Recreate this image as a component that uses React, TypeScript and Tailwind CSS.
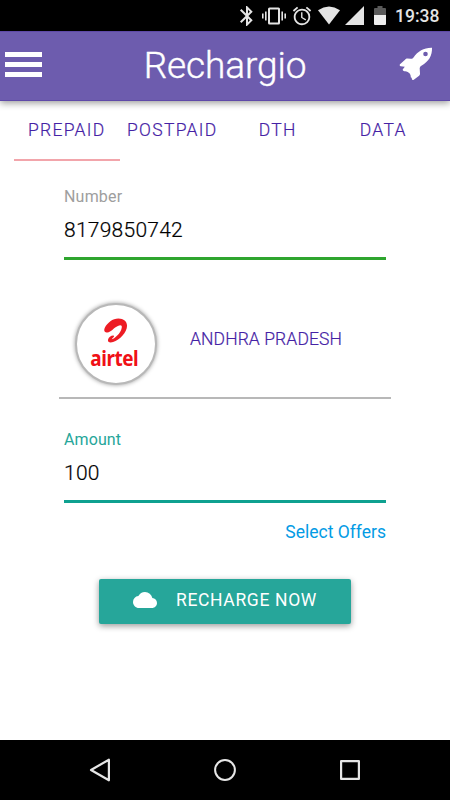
import React, {useState} from 'react';
import {MdAlarm, MdBluetooth, MdCloud} from 'react-icons/md';

const tabs = ['PREPAID', 'POSTPAID', 'DTH', 'DATA'];

const StatusBar = () => (
    <div className="flex h-[31px] items-center bg-black pl-[235px] text-[#e4e4e4]">
        <MdBluetooth className="h-6 w-6 shrink-0"/>
        <svg className="ml-[3px] h-6 w-6 shrink-0" viewBox="0 0 24 24" fill="currentColor">
            <path d="M0 9.500h1.600v5H0zM3 7.500h1.600v9H3zM19.400 7.500H21v9h-1.600zM22.400 9.500H24v5h-1.600z"/>
            <path fillRule="evenodd" d="M7.500 3.500h9q1.500 0 1.500 1.500v14q0 1.500-1.500 1.500h-9Q6 20.500 6 19V5q0-1.500 1.500-1.500zM8 5.500v13h8v-13z"/>
        </svg>
        <MdAlarm className="ml-1 h-[22px] w-6 shrink-0"/>
        <svg className="ml-[3px] h-[19px] w-6 shrink-0" viewBox="0 0 24 19" fill="currentColor">
            <path d="M12 18.500 1 4.200Q12-3 23 4.200z"/>
        </svg>
        <svg className="ml-[4px] h-[19px] w-[19px] shrink-0" viewBox="0 0 19 19" fill="currentColor">
            <path d="M19 0v19H0z"/>
        </svg>
        <svg className="ml-[10px] h-[19px] w-3 shrink-0" viewBox="0 0 12 19">
            <path d="M3.500 0h5v2H11q1 0 1 1v6H0V3q0-1 1-1h2.500z" fill="#5a5a5a"/>
            <path d="M0 9h12v9q0 1-1 1H1q-1 0-1-1z" fill="#eeeeee"/>
        </svg>
        <span className="mt-[2px] ml-[9px] text-[17.5px] leading-none font-medium">19:38</span>
    </div>
);

const Header = () => (
    <header className="z-10 flex h-[70px] items-center border-y border-[#5f49a8] bg-[#6d5cae] pr-[17px] pl-[5px] shadow-[0_2px_7px_rgba(0,0,0,0.4)]">
        <button type="button" aria-label="Menu" className="flex w-[37px] flex-col gap-[5px] pb-[3px]">
            <span className="h-[5px] bg-white"/>
            <span className="h-[5px] bg-white"/>
            <span className="h-[5px] bg-white"/>
        </button>
        <h1 className="flex-1 pb-[2px] pl-[9px] text-center text-[37px] leading-none font-light tracking-[-0.1px] text-white [-webkit-text-stroke:0.4px_white]">Rechargio</h1>
        <svg className="mb-[5px] h-[34px] w-[34px]" viewBox="0 0 34 34" fill="#ffffff">
            <path
                fillRule="evenodd"
                d="M33 .700C25 .500 19 4 14.500 10.500c-.700 1-1.500 1.300-2.700 1.200L8.300 11.500c-.900 0-1.500.300-2 1.100L1 17.200c-.6.800-.3 1.800.7 2l4.100.6c-.7.900-1.700 1.800-2.200 2.900.500 1.200 1.500 1.500 2.600 1.500 1.800.1 3.400.9 4.500 2.400.9 1.200 1 2.400 1.100 3.700.1.500.6.600 1 .3l0 1.400c.300 1.200 1.200 1.300 2 .7l5.300-3.900c.700-.600 1-1.300.9-2.300l-.3-4.900c0-1.100.4-1.900 1.300-2.700C30 14.500 33.300 8.500 33 .700zM26.500 4.700a2.300 2.300 0 1 1 0 4.600 2.300 2.300 0 0 1 0-4.600z"
            />
        </svg>
    </header>
);

const AirtelLogo = () => (
    <div className="-ml-px flex h-[82px] w-[82px] flex-col items-center rounded-full border-2 border-[#b8b8b8] bg-white pt-[13px] text-[#ed1c24] shadow-[0_0_4px_rgba(0,0,0,0.4)]">
        <svg className="mr-[2px] h-[25px] w-[25px]" viewBox="0 0 26 26" fill="currentColor">
            <path d="M4.500 15C1.500 15.500.500 13 2 10 4.500 5 10 .500 16 .500c5.500 0 9 3 9 7.500 0 7-7.500 14.500-14.500 17-3.500 1-5.800 0-5.300-2.500.500-2.300 3.300-4.300 5.500-4.200.9.100 1 .7.600 1.300l-2.300 2.600c2.500-.200 9.500-6 10.500-12 .500-3-1.500-3-4-2-4 1.500-7 6.300-11 6.800z"/>
        </svg>
        <span className="mt-[3px] mr-[3px] scale-x-[0.88] font-['Noto_Sans',sans-serif] text-[21.5px] leading-[24px] font-bold tracking-[-0.5px] text-[#f01016]">airtel</span>
    </div>
);

const NavBar = () => (
    <nav className="flex h-[60px] items-center justify-between bg-black px-[88px]">
        <svg className="h-6 w-6" viewBox="0 0 24 24" fill="none" stroke="#e6e6e6" strokeWidth="2.200" strokeLinejoin="round">
            <path d="M20.900 1.700v20.600L3 12z"/>
        </svg>
        <svg className="h-6 w-6" viewBox="0 0 24 24" fill="none" stroke="#e6e6e6" strokeWidth="2">
            <circle cx="12" cy="12" r="9.900"/>
        </svg>
        <svg className="h-6 w-6" viewBox="0 0 24 24" fill="none" stroke="#e6e6e6" strokeWidth="2.200" strokeLinejoin="round">
            <path d="M3.100 3.100h17.800v17.800H3.100z"/>
        </svg>
    </nav>
);

export default function App() {
    const [activeTab, setActiveTab] = useState('PREPAID');
    const [number, setNumber] = useState('8179850742');
    const [amount, setAmount] = useState('100');

    return (
        <div className="flex h-[800px] w-[450px] flex-col overflow-hidden bg-white font-[Roboto,sans-serif]">
            <StatusBar/>
            <Header/>
            <div className="grid h-[60px] grid-cols-4 px-[14px]">
                {tabs.map((tab) => (
                    <button
                        key={tab}
                        type="button"
                        onClick={() => setActiveTab(tab)}
                        className={`border-b-2 pt-px text-[17.5px] leading-[57px] font-light tracking-[1.300px] text-[#4522a5] [-webkit-text-stroke:0.2px_#4522a5] ${
                            activeTab === tab ? 'border-[#f2a5ab]' : 'border-transparent'
                        }`}
                    >
                        {tab}
                    </button>
                ))}
            </div>

            <main className="flex flex-1 flex-col px-[64px] pt-[25px]">
                <label className="flex h-[74px] flex-col border-b-[3px] border-[#2ea52e] pt-px">
                    <span className="text-[16px] leading-5 tracking-[0.2px] text-[#9e9e9e]">Number</span>
                    <input
                        value={number}
                        onChange={(e) => setNumber(e.target.value)}
                        className="mt-[9px] h-[30px] w-full text-[21px] font-light tracking-[0.25px] text-black outline-none [-webkit-text-stroke:0.2px_black]"
                    />
                </label>

                <div className="-mx-[5px] mt-[43px] flex h-[96px] border-b-2 border-[#b8b8b8] pl-[17px]">
                    <AirtelLogo/>
                    <span className="mt-[24px] ml-[33px] text-[17.5px] leading-6 font-light tracking-[0.1px] text-[#4522a5] [-webkit-text-stroke:0.2px_#4522a5]">ANDHRA PRADESH</span>
                </div>

                <label className="mt-[30px] flex h-[74px] flex-col border-b-[3px] border-[#0fa190] pt-px">
                    <span className="text-[16px] leading-5 tracking-[0.1px] text-[#26a69a]">Amount</span>
                    <input
                        value={amount}
                        onChange={(e) => setAmount(e.target.value)}
                        className="mt-[9px] h-[30px] w-full text-[21px] font-light tracking-[0.25px] text-black outline-none [-webkit-text-stroke:0.2px_black]"
                    />
                </label>

                <a href="#offers" className="mt-[17px] self-end text-[17.5px] leading-6 text-[#039be5]">Select Offers</a>

                <button
                    type="button"
                    className="mt-[35px] flex h-[45px] w-[252px] items-center self-center rounded-[2px] bg-[#26a69a] pb-[2px] pl-[34px] text-[17.5px] tracking-[0.65px] text-white shadow-[0_2px_6px_rgba(0,0,0,0.4)]"
                >
                    <MdCloud className="mr-[19px] mb-[2px] h-6 w-6"/>
                    RECHARGE NOW
                </button>
            </main>
            <NavBar/>
        </div>
    );
}
